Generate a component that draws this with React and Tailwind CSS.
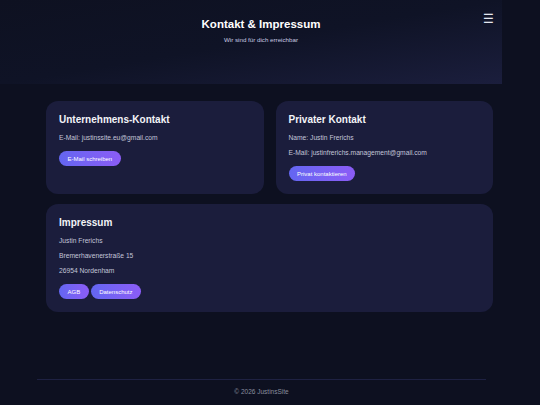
import React from 'react';

const Card = ({ title, children, className = '' }) => (
  <div className={`rounded-xl bg-[#1b1d3c] px-[13px] pt-[13px] pb-[13px] ${className}`}>
    <h2 className="text-[10px] leading-[12px] font-bold text-[#f3f4f8] mb-[7px]">{title}</h2>
    {children}
  </div>
);

const Line = ({ children }) => (
  <p className="text-[6.7px] leading-[10px] text-[#c3c5d9] mb-[5px]">{children}</p>
);

const Pill = ({ children }) => (
  <button className="flex items-center h-[15px] px-[8.5px] rounded-full bg-gradient-to-r from-[#6366f1] to-[#8b5cf6] text-[6px] text-white leading-[8px]">
    {children}
  </button>
);

const App = () => {
  return (
    <div
      className="min-h-[405px] w-[540px] bg-[#0d1020] overflow-hidden"
      style={{ fontFamily: '"Liberation Sans", Arial, sans-serif' }}
    >
      {/* Kopfbereich */}
      <header className="relative w-[502px] h-[84px] bg-gradient-to-br from-[#0e1121] via-[#0f1326] to-[#1b1e3d]">
        <div className="pl-[20px] pt-[17px] text-center">
          <h1 className="text-[11.5px] leading-[14px] font-bold text-white">Kontakt &amp; Impressum</h1>
          <p className="mt-[5px] text-[6.2px] leading-[8px] text-[#c9cbe2]">Wir sind für dich erreichbar</p>
        </div>
        <button className="absolute top-[12px] right-[8px] text-[12px] leading-[14px] text-[#e5e7f0]">☰</button>
      </header>

      {/* Inhalt */}
      <main className="ml-[46px] w-[447px] mt-[17px]">
        <div className="grid grid-cols-2 gap-[12px]">
          <Card title="Unternehmens-Kontakt">
            <Line>E-Mail: justinssite.eu@gmail.com</Line>
            <div className="mt-[8px] flex">
              <Pill>E-Mail schreiben</Pill>
            </div>
          </Card>
          <Card title="Privater Kontakt">
            <Line>Name: Justin Frerichs</Line>
            <Line>E-Mail: justinfrerichs.management@gmail.com</Line>
            <div className="mt-[8px] flex">
              <Pill>Privat kontaktieren</Pill>
            </div>
          </Card>
        </div>

        <Card title="Impressum" className="mt-[10px]">
          <Line>Justin Frerichs</Line>
          <Line>Bremerhavenerstraße 15</Line>
          <Line>26954 Nordenham</Line>
          <div className="mt-[8px] flex gap-[2px]">
            <Pill>AGB</Pill>
            <Pill>Datenschutz</Pill>
          </div>
        </Card>
      </main>

      {/* Fußzeile */}
      <footer className="ml-[37px] w-[449px] mt-[67px] border-t border-[#1e2142] pt-[7px] pb-[8px] text-center">
        <p className="text-[6.5px] leading-[10px] text-[#8a8d9f]">© 2026 JustinsSite</p>
      </footer>
    </div>
  );
};

export default App;
